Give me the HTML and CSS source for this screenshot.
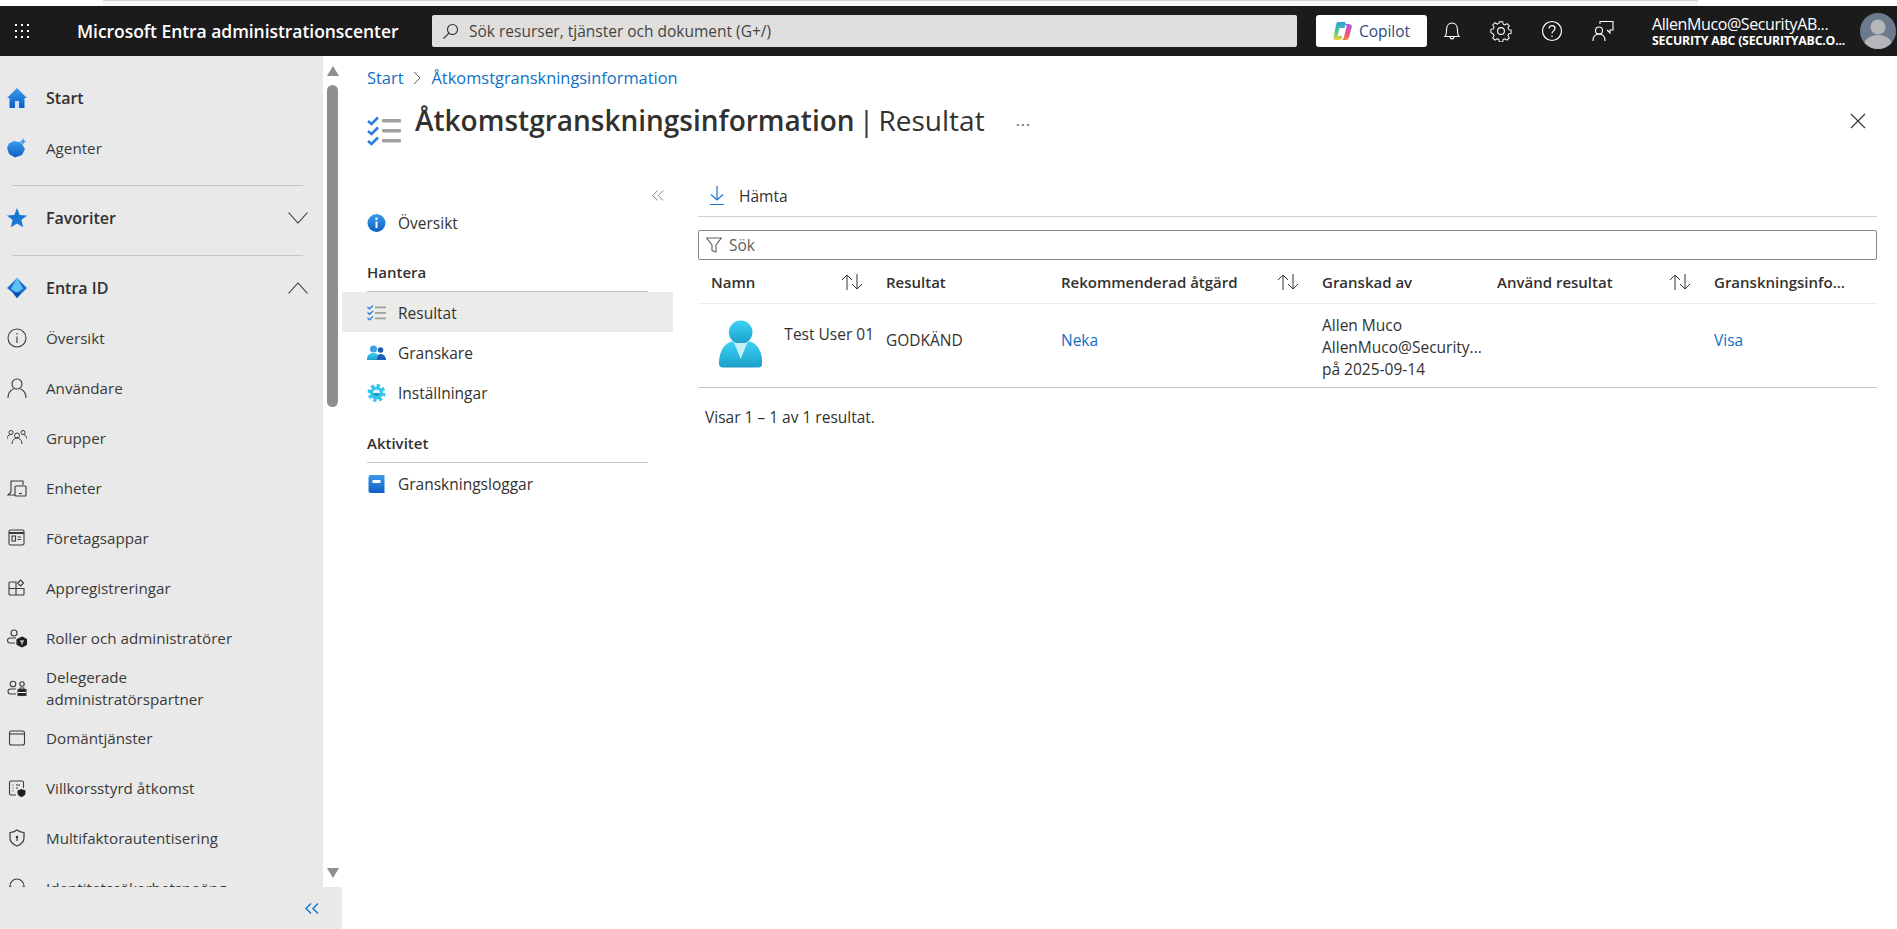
FILE: index.html
```html
<!DOCTYPE html>
<html lang="sv">
<head>
  <meta charset="utf-8">
  <title>Åtkomstgranskningsinformation | Resultat</title>
  <link rel="stylesheet" href="styles.css">
</head>
<body>
<svg class="defs" width="0" height="0">
  <defs>
    <linearGradient id="blue" x1="0" y1="0" x2="0" y2="1"><stop offset="0" stop-color="#3a9bec"/><stop offset="1" stop-color="#0f5fc4"/></linearGradient>
    <linearGradient id="cyan" x1="0" y1="0" x2="0" y2="1"><stop offset="0" stop-color="#3cd4f6"/><stop offset="1" stop-color="#1c9ec9"/></linearGradient>
    <linearGradient id="pilot-a" x1="0" y1="0" x2="0" y2="1"><stop offset="0" stop-color="#2f9fe8"/><stop offset=".55" stop-color="#55c98a"/><stop offset="1" stop-color="#f2d23c"/></linearGradient>
    <linearGradient id="pilot-b" x1="0" y1="0" x2="0" y2="1"><stop offset="0" stop-color="#a85ce0"/><stop offset=".55" stop-color="#ec4f8f"/><stop offset="1" stop-color="#f58a32"/></linearGradient>
  </defs>
</svg>

<div class="topstrip"></div>

<header class="topbar">
  <svg class="waffle" width="16" height="16" viewBox="0 0 16 16" fill="#fff">
    <rect x="1" y="1" width="2" height="2"/><rect x="7" y="1" width="2" height="2"/><rect x="13" y="1" width="2" height="2"/>
    <rect x="1" y="7" width="2" height="2"/><rect x="7" y="7" width="2" height="2"/><rect x="13" y="7" width="2" height="2"/>
    <rect x="1" y="13" width="2" height="2"/><rect x="7" y="13" width="2" height="2"/><rect x="13" y="13" width="2" height="2"/>
  </svg>
  <div class="brand">Microsoft Entra administrationscenter</div>
  <div class="global-search">
    <svg width="17" height="17" viewBox="0 0 17 17" fill="none" stroke="#323130" stroke-width="1.1"><circle cx="10.5" cy="6.5" r="5"/><path d="M7 10.2 1.5 15.5"/></svg>
    <span>Sök resurser, tjänster och dokument (G+/)</span>
  </div>
  <button class="copilot">
    <svg width="19" height="20" viewBox="0 0 19 20">
      <path d="M5 1h6c1.500 0 2 1 1.600 2.300L9 16.500C8.500 18 7.500 19 6 19H3c-2 0-3-1.300-2.400-3.200L3 4C3.400 2 4 1 5 1z" fill="url(#pilot-a)"/>
      <path d="M10.500 3h5.500c2 0 3.200 1.300 2.700 3.200l-2.700 10C15.500 18 14.500 19 13 19H8c1.500 0 2.300-1 2.800-2.500L13.500 6c.4-1.500-.5-3-3-3z" fill="url(#pilot-b)"/>
      <path d="M6.500 7h6L10 15H4.500z" fill="#fff"/>
    </svg>
    Copilot
  </button>
  <div class="top-icons">
    <svg width="18" height="20" viewBox="0 0 18 20" fill="none" stroke="#fff" stroke-width="1.1"><path d="M2 15.500c1.500-1.500 1.500-3 1.500-6.500C3.500 4.500 6 2 9 2s5.500 2.500 5.500 7c0 3.500 0 5 1.500 6.500z"/><path d="M7 16c0 2.500 4 2.500 4 0"/></svg>
    <svg width="22" height="22" viewBox="0 0 22 22" fill="none" stroke="#fff" stroke-width="1.1"><circle cx="11" cy="11" r="3.400"/><path d="M9.200 .8h3.600l.6 2.700 1.900.8 2.300-1.500 2.500 2.500-1.500 2.300.8 1.900 2.700.6v3.600l-2.700.6-.8 1.900 1.500 2.300-2.500 2.500-2.300-1.500-1.900.8-.6 2.700H9.200l-.6-2.700-1.900-.8-2.300 1.500-2.500-2.500 1.500-2.300-.8-1.900L-.1 12.800V9.200l2.700-.6.800-1.900L1.900 4.400l2.500-2.500 2.300 1.500 1.900-.8z" transform="translate(1 1) scale(.91)"/></svg>
    <svg width="22" height="22" viewBox="0 0 22 22" fill="none" stroke="#fff" stroke-width="1.200"><circle cx="11" cy="11" r="9.500"/><path d="M8 8.500C8 6.500 9.500 5.700 11 5.700s3 1 3 2.700c0 2.400-3 2.600-3 5"/><path d="M11 15.500v1.500"/></svg>
    <svg width="22" height="22" viewBox="0 0 22 22" fill="none" stroke="#fff" stroke-width="1.100"><path d="M8 4V1.500h13V10h-3v3l-3-3"/><circle cx="7" cy="10.500" r="3.500"/><path d="M1 21c0-4.500 2.500-7 6-7s6 2.500 6 7"/></svg>
  </div>
  <div class="account">
    <div class="account-name">AllenMuco@SecurityAB...</div>
    <div class="account-org">SECURITY ABC (SECURITYABC.O...</div>
  </div>
  <svg class="account-pic" width="36" height="36" viewBox="0 0 36 36"><defs><clipPath id="pic"><circle cx="18" cy="18" r="18"/></clipPath></defs><g clip-path="url(#pic)"><rect width="36" height="36" fill="#6b7a8c"/><circle cx="18" cy="14" r="7.500" fill="#b4b6b9"/><ellipse cx="18" cy="32" rx="14" ry="10" fill="#b4b6b9"/></g></svg>
</header>

<div class="shell">
  <aside class="sidebar">
    <div class="side-scroll">
      <nav class="side-nav">
        <a class="side-item strong">
          <svg width="20" height="20" viewBox="0 0 20 20"><path d="M10 0 20 10h-2.500v10H2.500V10H0z" fill="url(#blue)"/><rect x="8" y="13" width="4" height="7" fill="#cfe4fa"/></svg>
          Start
        </a>
        <a class="side-item">
          <svg width="20" height="20" viewBox="0 0 20 20"><path d="M7 3 14 4.500 18 11 15 17 8 19.500 2 16 0 10 2 5.500z" fill="url(#blue)"/><path d="M16 0l1 2.500 2.500 1-2.500 1-1 2.500-1-2.500-2.500-1 2.500-1z" fill="#3a9bec"/></svg>
          Agenter
        </a>
        <hr class="side-rule">
        <a class="side-item strong">
          <svg width="20" height="20" viewBox="0 0 20 20"><path d="m10 0 2.700 6.900 7.300.5-5.600 4.700 1.800 7.200L10 15.400l-6.200 3.900 1.800-7.200L0 7.400l7.300-.5z" fill="#1a78d4"/></svg>
          Favoriter
          <svg class="chev" width="20" height="12" viewBox="0 0 20 12" fill="none" stroke="#323130" stroke-width="1.100"><path d="M.5.500 10 11 19.500.5"/></svg>
        </a>
        <hr class="side-rule">
        <a class="side-item strong">
          <svg width="20" height="20" viewBox="0 0 20 20"><path d="M10 0 0 10l6 5 4 5 10-10z" fill="#1f6fd0"/><path d="M10 0 4 11l6 3.500 6-4z" fill="#5cc4f2"/><path d="M10 14.500l-4 .5 4 5 4-5z" fill="#0c4ea8"/></svg>
          Entra ID
          <svg class="chev" width="20" height="12" viewBox="0 0 20 12" fill="none" stroke="#323130" stroke-width="1.100"><path d="M.5 11.500 10 1l9.500 10.500"/></svg>
        </a>
        <a class="side-item">
          <svg width="20" height="20" viewBox="0 0 20 20" fill="none" stroke="#3b3a39" stroke-width="1.100"><circle cx="10" cy="10" r="9"/><path d="M10 8.500V15M10 5v1.500"/></svg>
          Översikt
        </a>
        <a class="side-item">
          <svg width="20" height="20" viewBox="0 0 20 20" fill="none" stroke="#3b3a39" stroke-width="1.100"><circle cx="10" cy="6" r="5"/><path d="M1 20c0-5 3-8 5.500-9M19 20c0-5-3-8-5.500-9"/></svg>
          Användare
        </a>
        <a class="side-item">
          <svg width="20" height="20" viewBox="0 0 20 20" fill="none" stroke="#3b3a39" stroke-width="1"><circle cx="4" cy="4.500" r="2"/><circle cx="16" cy="4.500" r="2"/><circle cx="10" cy="7.500" r="2.500"/><path d="M0 11c0-2 1-4 3.500-4.500M20 11c0-2-1-4-3.500-4.500M5 16c0-3 2-6 5-6s5 3 5 6"/></svg>
          Grupper
        </a>
        <a class="side-item">
          <svg width="20" height="20" viewBox="0 0 20 20" fill="none" stroke="#3b3a39" stroke-width="1.100"><path d="M4 14V3h12v4"/><path d="M4 14 1 17h7"/><rect x="8" y="8" width="11" height="10" rx="1"/><path d="M12 15.500h3"/></svg>
          Enheter
        </a>
        <a class="side-item">
          <svg width="20" height="20" viewBox="0 0 20 20" fill="none" stroke="#3b3a39" stroke-width="1.100"><rect x="2" y="2" width="15" height="15" rx="1.500"/><path d="M2 5h15" stroke-width="2"/><rect x="5" y="8" width="3.500" height="5"/><path d="M10.500 9H14M10.500 11.500H14"/></svg>
          Företagsappar
        </a>
        <a class="side-item">
          <svg width="20" height="20" viewBox="0 0 20 20" fill="none" stroke="#3b3a39" stroke-width="1.100"><path d="M2 10V5a1 1 0 0 1 1-1h6v13H3a1 1 0 0 1-1-1zM2 10.500h15V16a1 1 0 0 1-1 1H9M9 4"/><path d="m13.500 2 3 3-3 3-3-3z"/></svg>
          Appregistreringar
        </a>
        <a class="side-item">
          <svg width="20" height="20" viewBox="0 0 20 20" fill="none" stroke="#3b3a39" stroke-width="1.100"><circle cx="7" cy="5" r="3"/><path d="M9 10H3a2 2 0 0 0 0 5h5"/><path d="m15 9 5 2.500v5L15 19l-5-2.500v-5z" fill="#201f1e" stroke="#201f1e"/><path d="M13 13h4M15 13v3.500" stroke="#fff"/></svg>
          Roller och administratörer
        </a>
        <a class="side-item">
          <svg width="20" height="20" viewBox="0 0 20 20" fill="none" stroke="#3b3a39" stroke-width="1.100"><circle cx="6" cy="6" r="2.800"/><circle cx="15" cy="6" r="2.200"/><path d="M9 11H3.500a2 2 0 0 0 0 5H9"/><rect x="11" y="11.500" width="8" height="6" fill="#201f1e"/><path d="M13 11.500V10h4v1.500M11 14.500h8" /><path d="M11 14.500h8" stroke="#fff"/></svg>
          <span>Delegerade<br>administratörspartner</span>
        </a>
        <a class="side-item">
          <svg width="20" height="20" viewBox="0 0 20 20" fill="none" stroke="#3b3a39" stroke-width="1.100"><rect x="2.500" y="3" width="15" height="14" rx="2"/><path d="M2.500 6h15"/></svg>
          Domäntjänster
        </a>
        <a class="side-item">
          <svg width="20" height="20" viewBox="0 0 20 20" fill="none" stroke="#3b3a39" stroke-width="1.100"><path d="M9 17H4a1.500 1.500 0 0 1-1.500-1.500v-11A1.500 1.500 0 0 1 4 3h11a1.500 1.500 0 0 1 1.500 1.500V10"/><path d="M5.500 7h1M5.500 10h1M5.500 13h1M9 7h4M9 10h2"/><path d="M14.500 11l4 1.500v2.500c0 2-2 3.500-4 4-2-.5-4-2-4-4v-2.500z" fill="#201f1e" stroke="none"/></svg>
          Villkorsstyrd åtkomst
        </a>
        <a class="side-item">
          <svg width="20" height="20" viewBox="0 0 20 20" fill="none" stroke="#3b3a39" stroke-width="1.200"><path d="M10 2c2 1.500 4.500 2.500 7 2.500V10c0 4-3 6.500-7 8-4-1.500-7-4-7-8V4.500C5.500 4.500 8 3.500 10 2z"/><circle cx="10" cy="9" r="1.300" fill="#3b3a39" stroke="none"/><path d="M10 10v3"/></svg>
          Multifaktorautentisering
        </a>
        <a class="side-item">
          <svg width="20" height="20" viewBox="0 0 20 20" fill="none" stroke="#3b3a39" stroke-width="1.100"><path d="M3 12V8a7 7 0 0 1 14 0v4"/><rect x="2" y="9" width="3" height="6" rx="1"/><rect x="15" y="9" width="3" height="6" rx="1"/></svg>
          Identitetssäkerhetspoäng
        </a>
      </nav>
      <div class="side-scrollbar">
        <span class="arrow-up"></span>
        <span class="thumb"></span>
        <span class="arrow-down"></span>
      </div>
    </div>
    <div class="side-foot">
      <svg width="14" height="11" viewBox="0 0 14 11" fill="none" stroke="#1a78d4" stroke-width="1.500"><path d="M6 .5 1 5.500l5 5M13 .5l-5 5 5 5"/></svg>
    </div>
  </aside>

  <main class="page">
    <div class="crumbs"><a>Start</a>
      <svg width="8" height="14" viewBox="0 0 8 14" fill="none" stroke="#605e5c"><path d="m1 1 6 6-6 6"/></svg>
      <a>Åtkomstgranskningsinformation</a></div>
    <div class="title-row">
      <svg class="title-icon" width="35" height="30" viewBox="0 0 35 30">
        <g fill="none" stroke="#2a7fdc" stroke-width="2.600"><path d="m1 5 3.500 3L11 1.500"/><path d="m1 15 3.500 3L11 11.500"/><path d="m1 25 3.500 3L11 21.500"/></g>
        <g fill="#a19f9d"><rect x="15" y="3" width="19" height="3.500" rx="1"/><rect x="15" y="13" width="19" height="3.500" rx="1"/><rect x="15" y="23" width="19" height="3.500" rx="1"/></g>
      </svg>
      <h1><b>Åtkomstgranskningsinformation</b> | Resultat</h1>
      <span class="more">···</span>
      <svg class="close" width="16" height="16" viewBox="0 0 16 16" fill="none" stroke="#323130" stroke-width="1.100"><path d="m1 1 14 14M15 1 1 15"/></svg>
    </div>

    <div class="blade">
      <nav class="menu">
        <div class="collapse">
          <svg width="12" height="11" viewBox="0 0 12 11" fill="none" stroke="#8a8886"><path d="M5.500.5 .8 5.500l4.700 5M11 .5 6.300 5.500l4.700 5"/></svg>
        </div>
        <a class="menu-item first">
          <svg width="18" height="18" viewBox="0 0 18 18"><circle cx="9" cy="9" r="9" fill="url(#blue)"/><path d="M9 7.500V14" stroke="#fff" stroke-width="2"/><circle cx="9" cy="4.700" r="1.300" fill="#fff"/></svg>
          Översikt
        </a>
        <div class="menu-head">Hantera</div>
        <a class="menu-item active">
          <svg width="19" height="16" viewBox="0 0 19 16"><g fill="none" stroke="#2a7fdc" stroke-width="1.300"><path d="m.5 2 2 1.800L6 .5"/><path d="m.5 7.500 2 1.800L6 6"/><path d="m.5 13 2 1.800L6 11.500"/></g><g fill="#a19f9d"><rect x="8" y="1.500" width="11" height="1.800"/><rect x="8" y="7" width="11" height="1.800"/><rect x="8" y="12.500" width="11" height="1.800"/></g></svg>
          Resultat
        </a>
        <a class="menu-item">
          <svg width="19" height="16" viewBox="0 0 19 16"><circle cx="6.500" cy="4" r="3.500" fill="#3aa0e8"/><path d="M0 15c0-5 2-7 6.500-7s6 2 6 7z" fill="url(#cyan)"/><circle cx="13.500" cy="5" r="2.800" fill="#1a5fb4"/><path d="M10 15c0-4 1-6 3.500-6s5.500 2 5.500 6z" fill="#1a5fb4"/></svg>
          Granskare
        </a>
        <a class="menu-item">
          <svg width="18" height="18" viewBox="0 0 18 18"><circle cx="9" cy="9" r="7.500" fill="none" stroke="#32c4ec" stroke-width="3" stroke-dasharray="3.300 2.590"/><circle cx="9" cy="9" r="6.500" fill="#32c4ec"/><circle cx="9" cy="9" r="3.500" fill="#e4f6fc"/><path d="M5.500 9a3.500 3.500 0 0 0 7 0z" fill="#1a9fd0"/></svg>
          Inställningar
        </a>
        <div class="menu-head second">Aktivitet</div>
        <a class="menu-item">
          <svg width="16" height="18" viewBox="0 0 16 18"><path d="M2 0h14v18H2a2 2 0 0 1-2-2V2a2 2 0 0 1 2-2z" fill="url(#blue)"/><rect x="4" y="5" width="8" height="3" fill="#fff"/></svg>
          Granskningsloggar
        </a>
      </nav>

      <section class="results">
        <div class="toolbar">
          <svg width="14" height="20" viewBox="0 0 14 20" fill="none" stroke="#1a78d4" stroke-width="1.200"><path d="M7 0v14M1 8.500 7 14l6-5.500M0 18.500h14"/></svg>
          Hämta
        </div>
        <div class="filter">
          <svg width="16" height="16" viewBox="0 0 16 16" fill="none" stroke="#605e5c" stroke-width="1.100"><path d="M.7 1h14.600L10 8v7l-4-1.500V8z"/></svg>
          Sök
        </div>
        <div class="grid grid-head">
          <div class="cell sortable first-col">Namn<svg class="sort" width="22" height="16" viewBox="0 0 22 16" fill="none" stroke="#323130"><path d="M6 16V1M1 6l5-5 5 5M16 0v15M11 10l5 5 5-5"/></svg></div>
          <div class="cell">Resultat</div>
          <div class="cell sortable">Rekommenderad åtgärd<svg class="sort" width="22" height="16" viewBox="0 0 22 16" fill="none" stroke="#323130"><path d="M6 16V1M1 6l5-5 5 5M16 0v15M11 10l5 5 5-5"/></svg></div>
          <div class="cell">Granskad av</div>
          <div class="cell sortable">Använd resultat<svg class="sort" width="22" height="16" viewBox="0 0 22 16" fill="none" stroke="#323130"><path d="M6 16V1M1 6l5-5 5 5M16 0v15M11 10l5 5 5-5"/></svg></div>
          <div class="cell">Granskningsinfo...</div>
        </div>
        <div class="grid grid-row">
          <div class="cell user">
            <svg width="46" height="50" viewBox="0 0 46 50"><circle cx="23" cy="12.500" r="12.500" fill="url(#cyan)"/><path d="M0 46c0-14 6-22 14-24 5 4 13 4 18 0 8 2 14 10 14 24 0 2.500-1.500 4-4 4H4c-2.500 0-4-1.500-4-4z" fill="url(#cyan)"/><path d="M16 24h14l-7 17z" fill="#c5f0fa"/></svg>
            <span>Test User 01</span>
          </div>
          <div class="cell raised">GODKÄND</div>
          <div class="cell raised"><a>Neka</a></div>
          <div class="cell stacked"><span>Allen Muco</span><span>AllenMuco@Security...</span><span>på 2025-09-14</span></div>
          <div class="cell"></div>
          <div class="cell raised"><a>Visa</a></div>
        </div>
        <p class="count">Visar 1 – 1 av 1 resultat.</p>
      </section>
    </div>
  </main>
</div>
</body>
</html>
```

FILE: styles.css
```css
html, body {
    margin: 0;
    padding: 0;
    height: 100%;
    overflow: hidden;
}

body {
    font: 15.500px/24px "Open Sans", "Noto Sans", sans-serif;
    color: #323130;
    background: #fff;
}

.defs {
    position: absolute;
}

a {
    color: #0f6fc6;
    text-decoration: none;
}

.topstrip {
    height: 6px;
    background: #f6f6f6;
    box-sizing: border-box;
    border-top: 1px solid #d6d6d6;
    margin: 0 199px 0 103px;
}

/* top bar */
.topbar {
    height: 50px;
    background: #1b1b1b;
    color: #fff;
    display: flex;
    align-items: center;
}

.waffle {
    margin-left: 14px;
    flex: none;
}

.brand {
    margin-left: 47px;
    width: 355px;
    font-size: 17.500px;
    font-weight: 600;
    letter-spacing: -.05px;
    white-space: nowrap;
}

.global-search {
    width: 865px;
    height: 32px;
    background: #e1dfdd;
    border-radius: 2px;
    color: #444;
    display: flex;
    align-items: center;
    gap: 10px;
    padding-left: 10px;
    box-sizing: border-box;
}

.copilot {
    margin-left: 19px;
    width: 111px;
    height: 32px;
    border: 0;
    border-radius: 3px;
    background: #fff;
    color: #2f4a80;
    font: 500 15.500px "Open Sans", sans-serif;
    display: flex;
    align-items: center;
    justify-content: center;
    gap: 7px;
    padding: 0;
}

.top-icons {
    margin-left: 15px;
    width: 210px;
    display: flex;
    align-items: center;
    justify-content: space-between;
    padding-right: 38px;
    padding-left: 1px;
    box-sizing: border-box;
}

.account {
    width: 208px;
    white-space: nowrap;
}

.account-name {
    font-size: 16px;
    line-height: 20px;
    letter-spacing: -.4px;
}

.account-org {
    font-size: 12.300px;
    font-weight: 700;
    line-height: 14px;
    letter-spacing: -.2px;
}

.account-pic {
    flex: none;
}

/* left navigation */
.shell {
    display: flex;
    height: 873px;
}

.sidebar {
    width: 342px;
    flex: none;
    display: flex;
    flex-direction: column;
}

.side-scroll {
    flex: 1;
    display: flex;
    min-height: 0;
}

.side-nav {
    width: 323px;
    background: #e9e9e9;
    padding-top: 17px;
    overflow: hidden;
    box-sizing: border-box;
}

.side-item {
    height: 50px;
    display: flex;
    align-items: center;
    gap: 19px;
    padding-left: 7px;
    font-size: 15.200px;
    color: #3b3a39;
    line-height: 22px;
}

.side-item svg {
    flex: none;
}

.side-item.strong {
    font-size: 16px;
    font-weight: 600;
    color: #323130;
}

.side-item .chev {
    margin-left: auto;
    margin-right: 15px;
}

.side-rule {
    border: 0;
    border-top: 1px solid #c8c6c4;
    margin: 12px 20px 7px 12px;
}

.side-scrollbar {
    width: 19px;
    position: relative;
    background: #fff;
}

.thumb {
    position: absolute;
    left: 4px;
    top: 29px;
    width: 11px;
    height: 322px;
    border-radius: 6px;
    background: #8f8f8f;
}

.arrow-up, .arrow-down {
    position: absolute;
    left: 4px;
    border-left: 6px solid transparent;
    border-right: 6px solid transparent;
}

.arrow-up {
    top: 10px;
    border-bottom: 10px solid #8f8f8f;
}

.arrow-down {
    top: 812px;
    border-top: 10px solid #8f8f8f;
}

.side-foot {
    height: 42px;
    background: #e9e9e9;
    display: flex;
    align-items: center;
    justify-content: flex-end;
    padding-right: 23px;
}

/* page */
.page {
    flex: 1;
    min-width: 0;
    padding-top: 10px;
}

.crumbs {
    height: 24px;
    margin-left: 25px;
    display: flex;
    align-items: center;
    gap: 10px;
    font-size: 16.400px;
}

.title-row {
    height: 85px;
    margin-left: 25px;
    display: flex;
    align-items: flex-start;
}

.title-icon {
    margin-top: 26px;
    flex: none;
}

.title-row h1 {
    margin: 6px 0 0 13px;
    font-size: 28px;
    line-height: 48px;
    font-weight: 400;
    word-spacing: -3px;
    white-space: nowrap;
}

.title-row h1 b {
    font-weight: 600;
    word-spacing: 0;
}

.more {
    margin: 11px 0 0 31px;
    line-height: 48px;
    font-size: 16px;
    letter-spacing: 1px;
    color: #605e5c;
}

.close {
    margin-left: auto;
    margin-right: 31px;
    margin-top: 23px;
}

.blade {
    display: flex;
}

.menu {
    width: 331px;
    flex: none;
    padding-top: 8px;
}

.collapse {
    height: 24px;
    display: flex;
    align-items: center;
    justify-content: flex-end;
    padding-right: 9px;
}

.menu-item {
    height: 40px;
    display: flex;
    align-items: center;
    gap: 12px;
    padding: 1px 0 0 25px;
    box-sizing: border-box;
    color: #323130;
}

.menu-item svg {
    width: 19px;
    flex: none;
}

.menu-item.first {
    height: 30px;
}

.menu-item.active {
    background: #edebe9;
}

.menu-head {
    margin: 17px 25px 0;
    height: 38px;
    line-height: 36px;
    box-sizing: border-box;
    font-size: 15px;
    font-weight: 600;
    border-bottom: 1px solid #c8c6c4;
}

.menu-head.second {
    margin-top: 13px;
}

.results {
    margin-left: 25px;
    width: 1179px;
}

.toolbar {
    height: 41px;
    display: flex;
    align-items: center;
    gap: 15px;
    padding-left: 12px;
    border-bottom: 1px solid #d2d0ce;
}

.filter {
    margin-top: 13px;
    height: 30px;
    box-sizing: border-box;
    border: 1px solid #8a8886;
    border-radius: 2px;
    display: flex;
    align-items: center;
    gap: 7px;
    padding-left: 7px;
    color: #605e5c;
}

.grid {
    display: grid;
    grid-template-columns: 176px 175px 261px 175px 217px 175px;
}

.grid-head {
    height: 44px;
    box-sizing: border-box;
    border-bottom: 1px solid #edebe9;
    font-size: 15px;
    font-weight: 600;
}

.grid-row {
    height: 84px;
    box-sizing: border-box;
    border-bottom: 1px solid #c8c6c4;
}

.cell {
    display: flex;
    align-items: center;
    padding-left: 12px;
    white-space: nowrap;
}

.first-col {
    padding-left: 13px;
}

.raised {
    padding-bottom: 12px;
}

.sortable {
    justify-content: space-between;
    padding-right: 11px;
}

.sort {
    flex: none;
}

.user {
    padding: 15px 0 0 21px;
    gap: 22px;
    align-items: flex-start;
}

.user span {
    margin-top: 3px;
}

.stacked {
    flex-direction: column;
    align-items: flex-start;
    justify-content: center;
    line-height: 22px;
    padding-top: 2px;
}

.count {
    margin: 17px 0 0 7px;
}
```
